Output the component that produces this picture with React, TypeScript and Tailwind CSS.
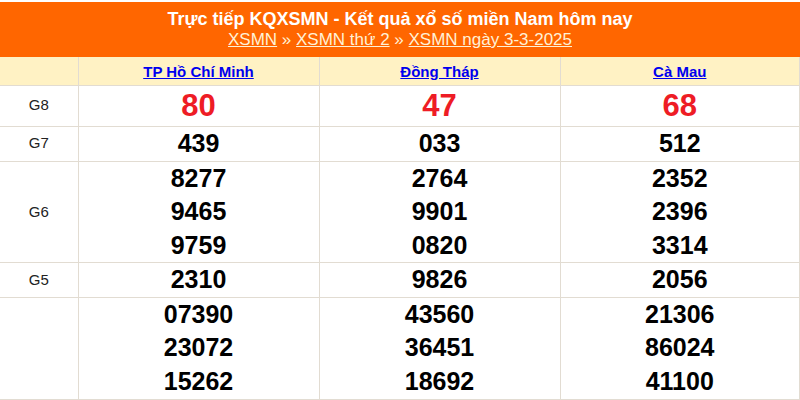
const provinces = ["TP Hồ Chí Minh", "Đồng Tháp", "Cà Mau"];

const rows: { label: string; cells: string[][]; h: string; red?: boolean }[] = [
  { label: "G8", cells: [["80"], ["47"], ["68"]], h: "h-[41px]", red: true },
  { label: "G7", cells: [["439"], ["033"], ["512"]], h: "h-[35px]" },
  {
    label: "G6",
    cells: [
      ["8277", "9465", "9759"],
      ["2764", "9901", "0820"],
      ["2352", "2396", "3314"],
    ],
    h: "h-[101px]",
  },
  { label: "G5", cells: [["2310"], ["9826"], ["2056"]], h: "h-[34px]" },
  {
    label: "",
    cells: [
      ["07390", "23072", "15262"],
      ["43560", "36451", "18692"],
      ["21306", "86024", "41100"],
    ],
    h: "h-[102px]",
  },
];

export default function App() {
  return (
    <div
      className="w-[800px] h-[400px] overflow-hidden bg-white pt-[2px]"
      style={{ fontFamily: '"Liberation Sans", Arial, sans-serif' }}
    >
      <div className="bg-[#ff6600] h-[55px] flex flex-col items-center pt-[7px]">
        <h1 className="text-white font-bold text-[18px] leading-[21px]">
          Trực tiếp KQXSMN - Kết quả xổ số miền Nam hôm nay
        </h1>
        <div className="text-[#fff1d6] text-[17px] leading-[20px]">
          <a href="#" className="underline">XSMN</a>
          <span> » </span>
          <a href="#" className="underline">XSMN thứ 2</a>
          <span> » </span>
          <a href="#" className="underline">XSMN ngày 3-3-2025</a>
        </div>
      </div>
      <table className="w-full table-fixed border-collapse">
        <colgroup>
          <col className="w-[78px]" />
          <col className="w-[241px]" />
          <col className="w-[241px]" />
          <col />
        </colgroup>
        <thead>
          <tr className="h-[28px] bg-[#fff2c4]">
            <th className="border border-[#e2dcd2] border-t-0 border-l-0"></th>
            {provinces.map((p) => (
              <th
                key={p}
                className="border border-[#e2dcd2] border-t-0 text-[15px] font-bold text-[#0000ee] pt-[2px]"
              >
                <a href="#" className="underline">{p}</a>
              </th>
            ))}
          </tr>
        </thead>
        <tbody>
          {rows.map((r, i) => (
            <tr key={i} className={r.h}>
              <td className="border border-[#e2dcd2] border-l-0 text-center text-[15px] text-[#222]">
                {r.label}
              </td>
              {r.cells.map((c, j) => (
                <td
                  key={j}
                  className="border border-[#e2dcd2] text-center align-middle"
                >
                  {c.map((n) => (
                    <div
                      key={n}
                      className={
                        r.red
                          ? "text-[31px] font-bold leading-[34px] text-[#ee1c25]"
                          : "text-[25px] font-bold leading-[33.5px] text-black"
                      }
                    >
                      {n}
                    </div>
                  ))}
                </td>
              ))}
            </tr>
          ))}
        </tbody>
      </table>
    </div>
  );
}
